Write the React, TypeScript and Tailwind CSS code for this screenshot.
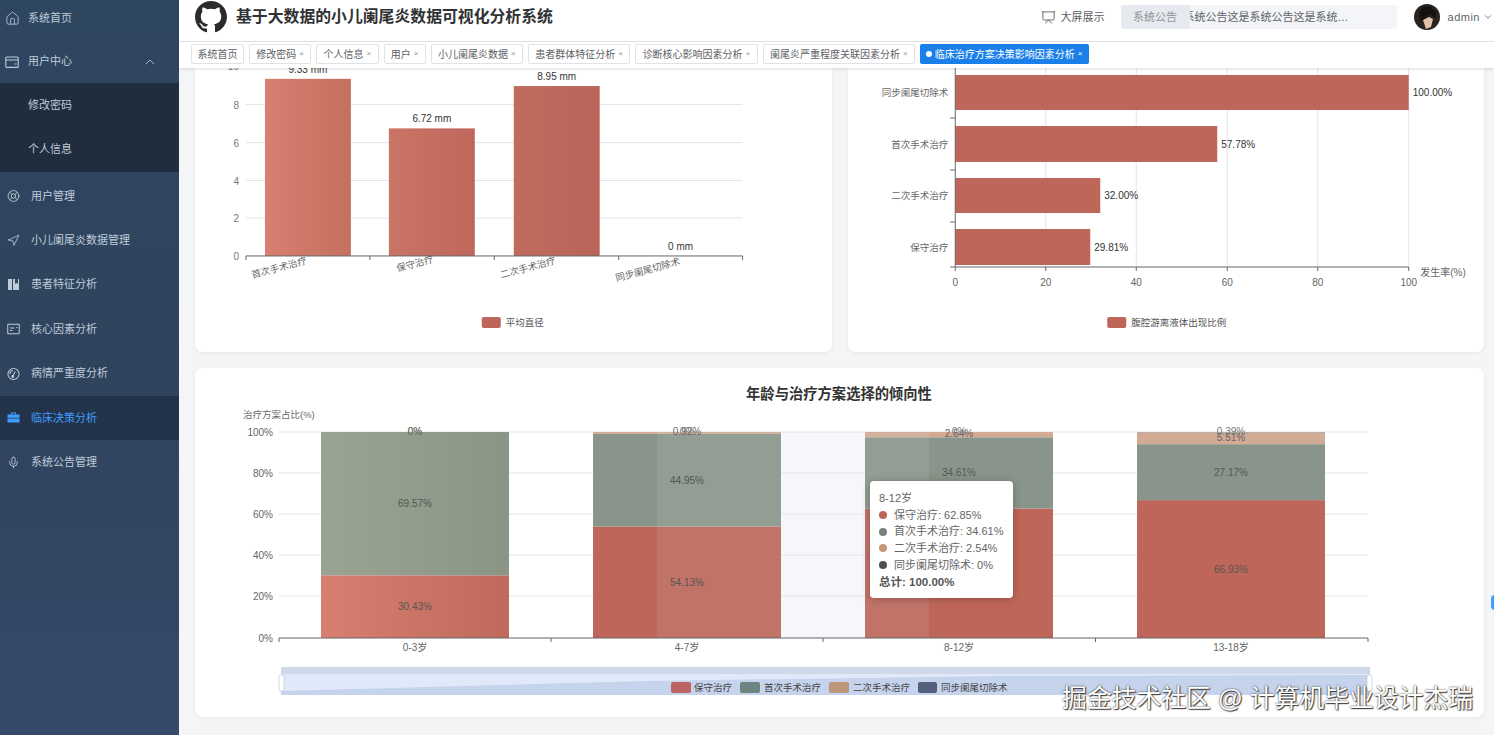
import { BsGithub } from 'react-icons/bs';
import { ChevronDown, ChevronUp, House, LifeBuoy, Mic, Navigation, Presentation } from 'lucide-react';

const FONT = 'Liberation Sans, Noto Sans CJK SC, sans-serif';

const WalletIcon = () => (
    <svg width="14" height="14" viewBox="0 0 14 14" fill="none" stroke="currentColor" strokeWidth="1.1">
        <rect x="0.8" y="2" width="12.4" height="10.4" rx="1" />
        <path d="M0.8 5h12.4M9.5 9h2" />
    </svg>
);

const BookIcon = () => (
    <svg width="13" height="13" viewBox="0 0 13 13" fill="currentColor">
        <path d="M1 1h4v11H1zM6 1h2v5l1.5-1.2L11 6V1h1v11H6z" />
    </svg>
);

const PostcardIcon = () => (
    <svg width="14" height="14" viewBox="0 0 14 14" fill="none" stroke="currentColor" strokeWidth="1.1">
        <rect x="0.8" y="2" width="12.4" height="10" rx="0.6" />
        <path d="M3.2 6h4.6M3.2 8.6h2.6M10 5.4h1.2" />
    </svg>
);

const OdometerIcon = () => (
    <svg width="14" height="14" viewBox="0 0 14 14" fill="none" stroke="currentColor" strokeWidth="1.1">
        <circle cx="7" cy="7" r="6" />
        <path d="M6.2 9.6L8.8 4.4M3.2 7a3.8 3.8 0 0 1 3-3.7" />
        <circle cx="6.2" cy="9.6" r="1" fill="currentColor" />
    </svg>
);

const BriefcaseIcon = () => (
    <svg width="13" height="13" viewBox="0 0 13 13" fill="currentColor">
        <path d="M4 1.5h5v2H8V2.5H5v1H4z" />
        <path d="M0.5 3.5h12v3.2h-12zM0.5 7.6h12v3.9h-12z" />
    </svg>
);

const MenuItem = ({ icon, label, active }: { icon: React.ReactNode; label: string; active?: boolean }) => (
    <div className={`h-[44.4px] flex items-center pl-[7px] gap-[11px] text-[11px] ${active ? 'bg-[#233349] text-[#409eff]' : 'text-[#bfcbd9]'}`}>
        <span className="w-[13px] flex justify-center">{icon}</span>
        <span>{label}</span>
    </div>
);

const Sidebar = () => (
    <aside className="w-[179px] shrink-0 bg-gradient-to-b from-[#2f4661] via-[#2f435c] to-[#36496a] overflow-hidden">
        <div className="-mt-[4px]">
            <div className="h-[44.4px] flex items-center pl-[5px] gap-[8px] text-[11px] text-[#bfcbd9]">
                <House size={15} strokeWidth={1.3} />
                <span>系统首页</span>
            </div>
            <div className="h-[42.6px] flex items-center pl-[5px] gap-[9px] text-[11px] text-[#bfcbd9]">
                <WalletIcon />
                <span>用户中心</span>
                <ChevronUp size={16} strokeWidth={1.3} className="ml-[61px]" />
            </div>
            <div className="bg-[#1f2d3f] text-[11px] text-[#bfcbd9]">
                <div className="h-[44.4px] flex items-center pl-[28px]">修改密码</div>
                <div className="h-[44.4px] flex items-center pl-[28px]">个人信息</div>
            </div>
            <div className="h-[2px]" />
            <MenuItem icon={<LifeBuoy size={14} strokeWidth={1.6} />} label="用户管理" />
            <MenuItem icon={<Navigation size={13} strokeWidth={1.5} />} label="小儿阑尾炎数据管理" />
            <MenuItem icon={<BookIcon />} label="患者特征分析" />
            <MenuItem icon={<PostcardIcon />} label="核心因素分析" />
            <MenuItem icon={<OdometerIcon />} label="病情严重度分析" />
            <MenuItem icon={<BriefcaseIcon />} label="临床决策分析" active />
            <MenuItem icon={<Mic size={15} strokeWidth={1.6} />} label="系统公告管理" />
        </div>
    </aside>
);

const Avatar = () => (
    <svg width="26" height="26" viewBox="0 0 26 26" className="shrink-0">
        <circle cx="13" cy="13" r="13" fill="#2a2320" />
        <path d="M9 16 L15 13 L19 15 L17 23 L12 25 Z" fill="#e2c3a8" />
        <path d="M5 8 L9 3 L16 2 L22 8 L21 14 L16 10 L10 15 L6 17 Z" fill="#15120f" />
    </svg>
);

const Header = () => (
    <header className="h-[42px] shrink-0 bg-white border-b border-[#e6e6e6] flex items-center pb-[7px] pr-[1px]">
        <BsGithub size={32} className="ml-[16px] shrink-0 text-[#2b2b2b]" />
        <h1 className="ml-[9px] shrink-0 whitespace-nowrap text-[15.85px] font-bold text-[#303133]">基于大数据的小儿阑尾炎数据可视化分析系统</h1>
        <div className="ml-auto shrink-0 flex items-center gap-[5px] text-[11px] whitespace-nowrap text-[#606266]">
            <Presentation size={15} strokeWidth={1.5} />
            <span>大屏展示</span>
        </div>
        <div className="ml-[16px] w-[276px] h-[24px] shrink-0 rounded-[3px] bg-[#f3f5f8] flex items-center overflow-hidden text-[11px]">
            <span className="w-[69px] h-full shrink-0 bg-[#e6eaef] text-[#909399] flex items-center justify-center">系统公告</span>
            <span className="w-[158px] overflow-hidden whitespace-nowrap text-[#606266]">
                <span className="block -ml-[6px]">系统公告这是系统公告这是系统…</span>
            </span>
        </div>
        <div className="ml-[17px] shrink-0 flex items-center text-[11px] text-[#606266]">
            <Avatar />
            <span className="ml-[8px] tracking-[0.5px]">admin</span>
            <ChevronDown size={10} className="ml-[3px]" />
        </div>
    </header>
);

const tabs = ['修改密码', '个人信息', '用户', '小儿阑尾炎数据', '患者群体特征分析', '诊断核心影响因素分析', '阑尾炎严重程度关联因素分析'];

const TabBar = () => (
    <div className="h-[26px] shrink-0 bg-white flex items-center pl-[12px] pb-[2px] gap-[5px] text-[10px] text-[#606266] shadow-[0_1px_3px_rgba(0,0,0,0.14)] relative z-10">
        <span className="h-[20px] px-[5.5px] flex items-center border border-[#dfe3e8] rounded-[2px]">系统首页</span>
        {tabs.map(t => (
            <span key={t} className="h-[20px] px-[6.3px] flex items-center gap-[3px] border border-[#dfe3e8] rounded-[2px]">
                {t}
                <span className="text-[8px] text-[#909399]">×</span>
            </span>
        ))}
        <span className="h-[20px] px-[6px] flex items-center gap-[3px] bg-[#1a7fe8] text-white rounded-[2px]">
            <span className="w-[6px] h-[6px] rounded-full bg-white" />
            临床治疗方案决策影响因素分析
            <span className="text-[8px]">×</span>
        </span>
    </div>
);

const diameter = [
    { name: '首次手术治疗', value: 9.33, x: 265, from: '#d77f71', to: '#c5705f', lx: 280, ly: 271, text: '9.33 mm' },
    { name: '保守治疗', value: 6.72, x: 389, from: '#c97566', to: '#bf675b', lx: 416, ly: 267, text: '6.72 mm' },
    { name: '二次手术治疗', value: 8.95, x: 514, from: '#c06b5e', to: '#ba655a', lx: 529, ly: 271, text: '8.95 mm' },
    { name: '同步阑尾切除术', value: 0, x: 638, from: '#bf665a', to: '#bf665a', lx: 649, ly: 273, text: '0 mm' },
];

const DiameterChart = () => (
    <svg viewBox="195 68 637 284" className="block w-full h-full" fontFamily={FONT}>
        <defs>
            {diameter.map((d, i) => (
                <linearGradient key={d.name} id={`bar${i}`} x1="0" x2="1" y1="0" y2="0">
                    <stop offset="0" stopColor={d.from} />
                    <stop offset="1" stopColor={d.to} />
                </linearGradient>
            ))}
        </defs>
        {[104.5, 142.5, 180.5, 218].map(y => (
            <line key={y} x1="246" x2="743" y1={y} y2={y} stroke="#e3e5e8" />
        ))}
        {[['8', 104.5], ['6', 142.5], ['4', 180.5], ['2', 218], ['0', 256], ['10', 66]].map(([t, y]) => (
            <text key={t} x="239" y={Number(y) + 4} textAnchor="end" fontSize="10" fill="#777">{t}</text>
        ))}
        {diameter.map((d, i) => {
            const h = d.value * 19;
            return (
                <g key={d.name}>
                    {h > 0 && <rect x={d.x} y={256 - h} width="86" height={h} fill={`url(#bar${i})`} />}
                    <text x={d.x + 43} y={256 - h - 6} textAnchor="middle" fontSize="10" fill="#333">{d.text}</text>
                    <text x={d.lx} y={d.ly} textAnchor="middle" fontSize="9.5" fill="#666" transform={`rotate(-15 ${d.lx} ${d.ly})`}>{d.name}</text>
                </g>
            );
        })}
        <line x1="246" x2="743" y1="256" y2="256" stroke="#666" />
        {[246, 370, 494.5, 619, 743].map(x => (
            <line key={x} x1={x} x2={x} y1="256" y2="260" stroke="#666" />
        ))}
        <rect x="482" y="317" width="19" height="11" rx="2" fill="#bf665a" />
        <text x="506" y="326" fontSize="9.5" fill="#555">平均直径</text>
    </svg>
);

const rates = [
    { name: '同步阑尾切除术', y: 75, h: 35, x2: 1408.5, text: '100.00%' },
    { name: '首次手术治疗', y: 126, h: 36, x2: 1217, text: '57.78%' },
    { name: '二次手术治疗', y: 178, h: 35, x2: 1100, text: '32.00%' },
    { name: '保守治疗', y: 229, h: 36, x2: 1090, text: '29.81%' },
];

const RateChart = () => (
    <svg viewBox="848 68 636 284" className="block w-full h-full" fontFamily={FONT}>
        {[1045.5, 1136, 1227, 1317.5, 1408.5].map(x => (
            <line key={x} x1={x} x2={x} y1="68" y2="267" stroke="#e3e5e8" />
        ))}
        {rates.map(r => (
            <g key={r.name}>
                <rect x="955" y={r.y} width={r.x2 - 955} height={r.h} fill="#bf665a" />
                <text x={r.x2 + 4} y={r.y + r.h / 2 + 3.5} fontSize="10" fill="#333">{r.text}</text>
                <text x="948" y={r.y + r.h / 2 + 3.5} textAnchor="end" fontSize="9.5" fill="#666">{r.name}</text>
            </g>
        ))}
        <line x1="955" x2="955" y1="68" y2="267" stroke="#666" />
        {[118, 170, 222, 267].map(y => (
            <line key={y} x1="950" x2="955" y1={y} y2={y} stroke="#666" />
        ))}
        <line x1="955" x2="1408.5" y1="267" y2="267" stroke="#666" />
        {[['0', 955], ['20', 1045.5], ['40', 1136], ['60', 1227], ['80', 1317.5], ['100', 1408.5]].map(([t, x]) => (
            <g key={t}>
                <line x1={x} x2={x} y1="267" y2="271" stroke="#666" />
                <text x={x} y="286" textAnchor="middle" fontSize="10" fill="#666">{t}</text>
            </g>
        ))}
        <text x="1420" y="276" fontSize="10" fill="#666">发生率(%)</text>
        <rect x="1107" y="317" width="19" height="11" rx="2" fill="#bf665a" />
        <text x="1131" y="326" fontSize="9.5" fill="#555">腹腔游离液体出现比例</text>
    </svg>
);

const PLOT_H = 206;
const BASE = 638;
const stacks = [
    { name: '0-3岁', x: 321, red: 30.43, green: 69.57, tan: 0, dark: 0, tanLabelY: 434.5 },
    { name: '4-7岁', x: 593, red: 54.13, green: 44.95, tan: 0.92, dark: 0, tanLabelY: 435 },
    { name: '8-12岁', x: 865, red: 62.85, green: 34.61, tan: 2.54, dark: 0, tanLabelY: 437 },
    { name: '13-18岁', x: 1137, red: 66.93, green: 27.17, tan: 5.51, dark: 0.39, tanLabelY: 441 },
];

const AgeChart = () => (
    <svg viewBox="195 368 1289 349" className="block w-full h-full" fontFamily={FONT}>
        <defs>
            <linearGradient id="redA" x1="0" x2="1" y1="0" y2="0">
                <stop offset="0" stopColor="#d77f71" />
                <stop offset="1" stopColor="#bf6a5c" />
            </linearGradient>
            <linearGradient id="greenA" x1="0" x2="1" y1="0" y2="0">
                <stop offset="0" stopColor="#9aa492" />
                <stop offset="1" stopColor="#8a9586" />
            </linearGradient>
        </defs>
        <text x="839" y="399" textAnchor="middle" fontSize="14.3" fontWeight="700" fill="#333">年龄与治疗方案选择的倾向性</text>
        <text x="243" y="418" fontSize="9.5" fill="#666">治疗方案占比(%)</text>
        <rect x="781" y="432" width="84" height="206" fill="#f5f7fb" />
        {[[100, 432], [80, 473], [60, 514], [40, 555], [20, 596], [0, 638]].map(([p, y]) => (
            <g key={p}>
                {p > 0 && <line x1="279" x2="1368" y1={y} y2={y} stroke="#e3e5e8" />}
                <text x="273" y={y + 3.5} textAnchor="end" fontSize="10" fill="#666">{p}%</text>
            </g>
        ))}
        {stacks.map((s, i) => {
            const redH = (s.red / 100) * PLOT_H;
            const greenH = (s.green / 100) * PLOT_H;
            const tanH = (s.tan / 100) * PLOT_H;
            const darkH = (s.dark / 100) * PLOT_H;
            const redY = BASE - redH;
            const greenY = redY - greenH;
            const tanY = greenY - tanH;
            const cx = s.x + 94;
            return (
                <g key={s.name}>
                    <rect x={s.x} y={redY} width="188" height={redH} fill={i === 0 ? 'url(#redA)' : '#bf665a'} />
                    <rect x={s.x} y={greenY} width="188" height={greenH} fill={i === 0 ? 'url(#greenA)' : '#89958a'} />
                    <rect x={s.x} y={tanY} width="188" height={tanH} fill="#d3ab95" />
                    <rect x={s.x} y={tanY - darkH} width="188" height={darkH} fill="#a9a29c" />
                    <rect x={i === 1 ? 657 : s.x} y="432" width={i === 1 ? 124 : 64} height="206" fill="#dfe8ee" opacity={i === 1 || i === 2 ? 0.1 : 0} />
                    <text x={cx} y={redY + redH / 2 + 3.5} textAnchor="middle" fontSize="10" fill="#555">{s.red}%</text>
                    <text x={cx} y={greenY + greenH / 2 + 3.5} textAnchor="middle" fontSize="10" fill="#555">{s.green}%</text>
                    <text x={cx} y={s.tanLabelY} textAnchor="middle" fontSize="10" fill="#666">{s.tan}%</text>
                    <text x={cx} y="434.5" textAnchor="middle" fontSize="10" fill="#777">{s.dark}%</text>
                    <text x={cx} y="651" textAnchor="middle" fontSize="10" fill="#666">{s.name}</text>
                </g>
            );
        })}
        <line x1="279" x2="1368" y1="638" y2="638" stroke="#666" />
        {[279, 551, 823, 1095.5, 1368].map(x => (
            <line key={x} x1={x} x2={x} y1="638" y2="642" stroke="#666" />
        ))}

        <rect x="281" y="667" width="1089" height="28" fill="#dfe9f9" />
        <rect x="281" y="667" width="1089" height="7" fill="#cfd8e6" />
        <path d="M281 691 L650 681 L1000 676 L1370 675 L1370 695 L281 695 Z" fill="#c5d3ec" />
        <rect x="279" y="675" width="5" height="16" rx="2" fill="#ffffff" stroke="#c0c8d4" strokeWidth="0.7" />
        <rect x="1367" y="675" width="5" height="16" rx="2" fill="#ffffff" stroke="#c0c8d4" strokeWidth="0.7" />
        {[
            { x: 671, w: 20, c: '#bc6464', t: '保守治疗', tx: 694 },
            { x: 740, w: 20, c: '#6e8480', t: '首次手术治疗', tx: 764 },
            { x: 829, w: 20, c: '#bd9578', t: '二次手术治疗', tx: 853 },
            { x: 918, w: 19, c: '#535f7c', t: '同步阑尾切除术', tx: 941 },
        ].map(l => (
            <g key={l.t}>
                <rect x={l.x} y="682" width={l.w} height="11" rx="2" fill={l.c} />
                <text x={l.tx} y="691" fontSize="9.5" fill="#444">{l.t}</text>
            </g>
        ))}
    </svg>
);

const tipRows = [
    { c: '#bf665a', t: '保守治疗: 62.85%' },
    { c: '#7b8279', t: '首次手术治疗: 34.61%' },
    { c: '#c6967a', t: '二次手术治疗: 2.54%' },
    { c: '#4f4f4f', t: '同步阑尾切除术: 0%' },
];

const Tooltip = () => (
    <div className="absolute left-[675px] top-[113px] w-[143px] h-[117px] bg-white rounded-[4px] shadow-[0_1px_8px_rgba(0,0,0,0.25)] pl-[9px] pt-[9px] text-[11px] leading-[16.7px] text-[#666]">
        <div>8-12岁</div>
        {tipRows.map(r => (
            <div key={r.t} className="flex items-center gap-[7px]">
                <span className="w-[8px] h-[8px] rounded-full shrink-0" style={{ backgroundColor: r.c }} />
                <span className="whitespace-nowrap">{r.t}</span>
            </div>
        ))}
        <div className="font-bold text-[11.5px] text-[#555]">总计: 100.00%</div>
    </div>
);

const App = () => (
    <div className="relative w-[1494px] h-[735px] flex overflow-hidden bg-[#f3f5f7] font-['Liberation_Sans','Noto_Sans_CJK_SC',sans-serif]">
        <Sidebar />
        <div className="flex-1 min-w-0 flex flex-col">
            <Header />
            <TabBar />
            <main className="flex-1 min-h-0 pl-[16px] pr-[10px]">
                <div className="flex gap-[16px]">
                    <div className="flex-1 h-[284px] bg-white rounded-b-[8px] shadow-[0_1px_4px_rgba(0,0,0,0.06)]">
                        <DiameterChart />
                    </div>
                    <div className="flex-1 h-[284px] bg-white rounded-b-[8px] shadow-[0_1px_4px_rgba(0,0,0,0.06)]">
                        <RateChart />
                    </div>
                </div>
                <div className="relative mt-[16px] h-[349px] bg-white rounded-[8px] shadow-[0_1px_4px_rgba(0,0,0,0.06)]">
                    <AgeChart />
                    <Tooltip />
                </div>
            </main>
        </div>
        <span className="absolute right-[-5px] top-[595px] w-[8px] h-[15px] rounded-full bg-[#409eff]" />
        <span className="absolute right-[21px] top-[684px] text-[24.8px] leading-[30px] text-white whitespace-nowrap [text-shadow:0_0_2px_#222,1px_1px_1px_#444]">
            掘金技术社区 @ 计算机毕业设计杰瑞
        </span>
    </div>
);

export default App;
